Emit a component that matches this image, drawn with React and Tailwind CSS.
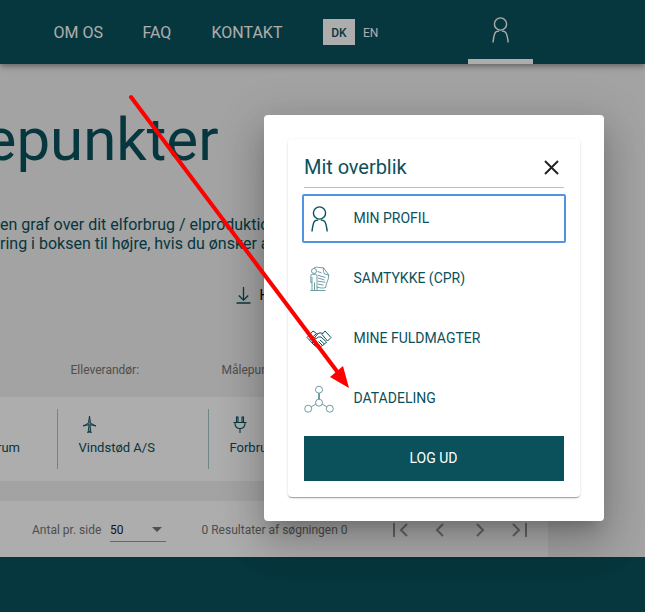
function Person({ className }) {
  return (
    <svg className={className} width="18" height="26" viewBox="0 0 18 26" fill="none" stroke="currentColor" strokeWidth="1.4">
      <circle cx="8.500" cy="7" r="6.100" />
      <path d="M1 25.500 C1.500 21 2 17 3.500 15.200 C4.400 14.200 5.500 14.100 7.200 14.100 M9.800 14.100 C11.500 14.100 12.600 14.200 13.500 15.200 C15.200 17 15.700 21 16.200 25.500" />
    </svg>
  );
}

function Consent() {
  return (
    <svg className="ml-[6px]" width="20" height="26" viewBox="0 0 20 26" fill="none" stroke="#5d929a" strokeWidth="0.9">
      <circle cx="4" cy="5" r="2.500" />
      <path d="M4 1.800 C5.500 1.200 7 .8 8.500 1.500 L13.500 1.800 L18.800 9 C18.800 14 16 17 15.700 21.500 C12.500 22.500 10 22 7 21" />
      <path d="M13.500 1.800 C13.200 4.500 13.500 6.500 14.500 8 L18.800 9" />
      <path d="M.8 16.500 V10 Q.8 8.300 2.500 8.300 H5.500 Q7 8.300 7 10 V24 M2 11 V24 M4.500 16.500 V24 M.8 16.500 H2 M.3 24.500 H15.500" />
      <path d="M7.500 5.500 L11.500 6.800 M8 9.300 L15.500 11.500 M8 12 L14.500 14 M8 15.200 L15.500 16.300 M8 18 L13.500 19.200" />
    </svg>
  );
}

function Handshake() {
  return (
    <svg className="ml-[2px]" width="26" height="18" viewBox="0 0 26 18" fill="none" stroke="#0b515c" strokeWidth="1" strokeLinejoin="round">
      <path d="M7 1 L1 7.500 L3.500 10 L10.500 3.500 Z M19 1 L25 7.500 L21.500 11 L16 4.500 Z" />
      <path d="M11 4 L14 2.800 L17 3.500 M11.500 4 L8.500 8 Q10 9.500 12.500 7 L15 7 L20.500 12 L18.500 14 L14 10 M18.500 14 L16.500 15.500 L12.500 11.500 M16.500 15.500 L14.500 16.500 L11 13" />
      <path d="M3.500 10 L6 13 L8.500 10.500 M6 13 L8 15 L11 12 M8 15 L10.500 17 L13 14.500" />
    </svg>
  );
}

function Network() {
  return (
    <svg width="30" height="28" viewBox="0 0 30 28" fill="none" stroke="#6f9ba2" strokeWidth="1">
      <circle cx="15" cy="4.700" r="3.500" />
      <circle cx="15" cy="17.700" r="3.500" />
      <circle cx="4.200" cy="23.700" r="3.500" />
      <circle cx="25.800" cy="23.700" r="3.500" />
      <path d="M14.500 8.200 V14.200 M15.500 8.200 V14.200 M11.900 19.100 L7.200 21.800 M18.100 19.100 L22.800 21.800" />
    </svg>
  );
}

function MenuRow({ icon, label, active }) {
  return (
    <div className={active ? "-mx-0.5 flex h-[49px] items-center rounded-[2px] border-2 border-[#5294e2]" : "flex h-[49px] items-center"}>
      <div className="flex w-[49.5px] shrink-0 items-center">{icon}</div>
      <span className="pb-0.5 text-sm text-[#0b515c]">{label}</span>
    </div>
  );
}

function PageIcon({ d }) {
  return (
    <svg width="24" height="24" viewBox="0 0 24 24" fill="none" stroke="#999" strokeWidth="2">
      <path d={d} />
    </svg>
  );
}

function Header() {
  return (
    <header className="relative flex h-16 shrink-0 items-center bg-[#0b515c] pl-[53.5px] text-base text-white shadow-[0_2px_4px_-1px_rgba(0,0,0,0.2),0_4px_5px_0_rgba(0,0,0,0.14),0_1px_10px_0_rgba(0,0,0,0.12)]">
      <span className="w-[89px] pt-0.5">OM OS</span>
      <span className="w-[69px] pt-0.5">FAQ</span>
      <span className="w-[111.5px] pt-0.5">KONTAKT</span>
      <span className="flex h-[26px] w-8 items-center justify-center bg-white pt-0.5 text-xs font-medium text-[#0b515c]">DK</span>
      <span className="ml-2 w-[105px] pt-0.5 text-xs">EN</span>
      <div className="flex h-full w-[65px] flex-col items-center justify-between">
        <Person className="mt-[17px]" />
        <div className="h-[5px] w-full bg-white" />
      </div>
    </header>
  );
}

function Page() {
  return (
    <div className="flex h-full flex-col bg-[#f0f0f0]">
      <Header />
      <main className="flex h-[493px] w-[548px] shrink-0 flex-col">
        <h1 className="mt-[38px] flex h-[76px] w-[218.5px] items-center justify-end text-[60px] leading-[76px] whitespace-nowrap text-[#0b515c]">epunkter</h1>
        <div className="mt-[37px] h-[38px] text-base leading-[19px] whitespace-nowrap text-[#0b515c]">
          <p>en graf over dit elforbrug / elproduktion</p>
          <p>ring i boksen til højre, hvis du ønsker at</p>
        </div>
        <div className="mt-[30px] flex h-6 items-center pl-[235.5px]">
          <svg width="15" height="18" viewBox="0 0 15 18" fill="none" stroke="#0b515c" strokeWidth="1.300">
            <path d="M7.500 1 V14 M2.800 9.500 L7.500 14.200 L12.200 9.500 M.5 17 H14.500" />
          </svg>
          <span className="ml-[9px] text-sm text-black">Hent</span>
        </div>
        <div className="mt-[53px] flex h-5 items-center pl-[70.500px] text-xs text-[#757575]">
          <span className="w-[151px]">Elleverandør:</span>
          <span>Målepunkt</span>
        </div>
        <section className="mt-[17px] flex h-[84px] shrink-0 bg-white pt-3 text-[13px] text-[#0b515c]">
          <div className="-ml-[3px] w-[60px] pt-[29px]">rum</div>
          <div className="flex h-[60px] w-[151px] flex-col border-l border-[#a6c4c4] pl-[20.500px]">
            <svg className="mt-1.5 ml-[3px]" width="15" height="18" viewBox="0 0 15 18" fill="#9ab5b9" stroke="#0b515c" strokeWidth=".9">
              <path d="M7.500 1 L8.300 6 V8 L14 11 L8 9.700 L8.800 16.500 H6.200 L7 9.700 L1 11 L6.700 8 V6 Z M5 17.300 H10" />
            </svg>
            <span className="mt-[5px] leading-5">Vindstød A/S</span>
          </div>
          <div className="flex h-[60px] flex-col border-l border-[#a6c4c4] pl-[20.500px]">
            <svg className="mt-1.5 ml-[3px]" width="15" height="18" viewBox="0 0 15 18" fill="none" stroke="#0b515c" strokeWidth="1.100">
              <path d="M.5 7.500 H13.500 M3.500 7 V2 H5 V7 M9 7 V2 H10.500 V7 M2 8 Q2 13.500 7 13.500 Q12 13.500 12 8 M7 13.500 V18" />
            </svg>
            <span className="mt-[5px] leading-5">Forbrug</span>
          </div>
        </section>
        <section className="mt-5 flex h-14 shrink-0 items-center bg-white pl-[32px] text-xs text-[#757575]">
          <span className="w-[78px] pt-0.5">Antal pr. side</span>
          <div className="mt-px flex h-[25px] w-14 items-center justify-between border-b border-[#999] text-[#212121]">
            <span className="pt-0.5">50</span>
            <span className="mr-1 border-x-5 border-t-5 border-x-transparent border-t-[#757575]" />
          </div>
          <span className="ml-[35.500px] w-[186.500px] pt-0.5">0 Resultater af søgningen 0</span>
          <div className="flex items-center gap-4 pt-0.5">
            <PageIcon d="M6 5 V19 M19 6 L13 12 L19 18" />
            <PageIcon d="M15 6 L9 12 L15 18" />
            <PageIcon d="M9 6 L15 12 L9 18" />
            <PageIcon d="M5 6 L11 12 L5 18 M18 5 V19" />
          </div>
        </section>
      </main>
      <footer className="flex-1 bg-[#0b515c]" />
    </div>
  );
}

function Dialog() {
  return (
    <div className="absolute top-[115px] left-[264px] h-[406px] w-[340px] rounded bg-white p-6 shadow-[0_11px_15px_-7px_rgba(0,0,0,0.2),0_24px_38px_3px_rgba(0,0,0,0.14),0_9px_46px_8px_rgba(0,0,0,0.12)]">
      <div className="flex h-[358px] flex-col rounded px-4 shadow-[0_2px_1px_-1px_rgba(0,0,0,0.2),0_1px_1px_0_rgba(0,0,0,0.14),0_1px_3px_0_rgba(0,0,0,0.12)]">
        <div className="flex h-[49px] items-center justify-between border-b border-[#adc4cb] pt-[7px]">
          <h2 className="text-xl tracking-[-0.05px] text-[#0b515c]">Mit overblik</h2>
          <svg className="mt-px mr-[5px]" width="15" height="15" viewBox="0 0 15 15" stroke="#212121" strokeWidth="1.900">
            <path d="M1 1 L14 14 M14 1 L1 14" />
          </svg>
        </div>
        <div className="mt-1.5 flex flex-col gap-[11px]">
          <MenuRow active icon={<Person className="ml-[7px] text-[#0b515c]" />} label="MIN PROFIL" />
          <MenuRow icon={<Consent />} label="SAMTYKKE (CPR)" />
          <MenuRow icon={<Handshake />} label="MINE FULDMAGTER" />
          <MenuRow icon={<Network />} label="DATADELING" />
        </div>
        <button className="mt-[13px] h-[45px] shrink-0 bg-[#0b515c] pr-px pb-0.5 text-sm text-white">LOG UD</button>
      </div>
    </div>
  );
}

export default function App() {
  return (
    <div className="relative h-[612px] w-[645px] overflow-hidden font-[Roboto,sans-serif]">
      <Page />
      <div className="absolute inset-0 bg-black/32" />
      <Dialog />
      <svg className="absolute inset-0" width="645" height="612" viewBox="0 0 645 612">
        <path d="M131 97 L339 374" stroke="red" strokeWidth="4" strokeLinecap="round" />
        <path d="M349 388 L330 377 L343 366 Z" fill="red" />
      </svg>
    </div>
  );
}
